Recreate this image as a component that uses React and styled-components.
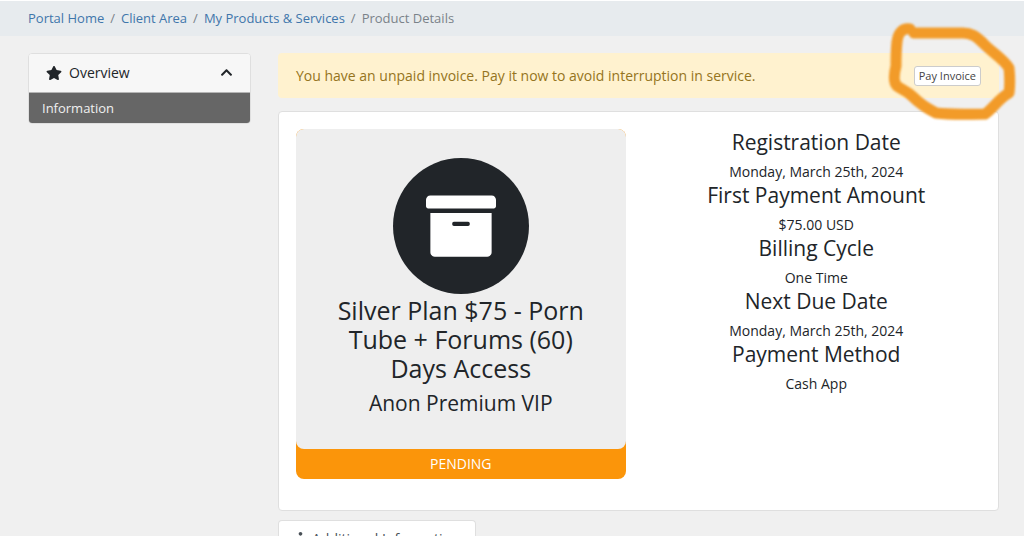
import React, { useState } from "react";
import styled, { createGlobalStyle, ThemeProvider } from "styled-components";
import { FaArchive, FaChevronUp, FaInfo, FaStar } from "react-icons/fa";

const theme = {
  colors: {
    page: "#f0f0f0",
    bar: "#e7ebee",
    white: "#ffffff",
    text: "#212529",
    muted: "#7a8289",
    link: "#3f76ab",
    border: "#dfdfdf",
    active: "#666666",
    warning: "#fff2cf",
    warningText: "#957420",
    pending: "#fb950a",
    marker: "#f29b29",
  },
  font: {
    xs: "11px",
    sm: "13px",
    md: "14px",
    lg: "21px",
    xl: "25px",
  },
};

const GlobalStyle = createGlobalStyle`
  *,
  *::before,
  *::after {
    box-sizing: border-box;
  }

  body {
    margin: 0;
    background-color: ${(p) => p.theme.colors.page};
    color: ${(p) => p.theme.colors.text};
    font-family: "Open Sans", "Noto Sans", sans-serif;
    font-size: ${(p) => p.theme.font.md};
    line-height: 21px;
  }
`;

const Root = styled.div`
  position: relative;
  height: 100vh;
  overflow: hidden;
  border-top: 1px solid ${(p) => p.theme.colors.white};
`;

const BreadcrumbBar = styled.nav`
  padding: 7px 28px;
  background-color: ${(p) => p.theme.colors.bar};
`;

const BreadcrumbList = styled.ol`
  display: flex;
  flex-wrap: wrap;
  margin: 0;
  padding: 0;
  list-style: none;
  font-size: ${(p) => p.theme.font.sm};
  color: ${(p) => p.theme.colors.muted};
`;

const Crumb = styled.li`
  & + &::before {
    content: "/";
    padding: 0 6px;
  }
`;

const CrumbLink = styled.a`
  color: ${(p) => p.theme.colors.link};
  text-decoration: none;

  &:hover {
    text-decoration: underline;
  }
`;

const Layout = styled.div`
  display: grid;
  grid-template-columns: 223px minmax(0, 1fr);
  align-items: start;
  gap: 27px;
  padding: 17px 25px 0 28px;
`;

const Box = styled.div`
  background-color: ${(p) => p.theme.colors.white};
  border: 1px solid ${(p) => p.theme.colors.border};
  border-radius: 4px;
`;

const Sidebar = styled(Box)`
  overflow: hidden;
`;

const SidebarToggle = styled.button`
  display: flex;
  align-items: center;
  gap: 7px;
  width: 100%;
  padding: 8px 17px 9px;
  border: 0;
  background-color: #f7f7f7;
  color: ${(p) => p.theme.colors.text};
  font: inherit;
  text-align: left;
  cursor: pointer;
`;

const SidebarTitle = styled.span`
  flex: 1;
`;

const SidebarLink = styled.a`
  display: block;
  padding: 5px 13px;
  border-top: 1px solid #b5b5b5;
  background-color: ${(p) => p.theme.colors.active};
  color: ${(p) => p.theme.colors.page};
  font-size: ${(p) => p.theme.font.sm};
  line-height: 20px;
  text-decoration: none;
`;

const Alert = styled.div`
  display: flex;
  align-items: center;
  justify-content: space-between;
  margin-bottom: 13px;
  padding: 12px 18px;
  border-radius: 4px;
  background-color: ${(p) => p.theme.colors.warning};
  color: ${(p) => p.theme.colors.warningText};
`;

const PayButton = styled.button`
  padding: 0 4px;
  border: 1px solid #cccccc;
  border-radius: 3px;
  background-color: ${(p) => p.theme.colors.white};
  color: #444444;
  font-family: inherit;
  font-size: ${(p) => p.theme.font.xs};
  line-height: 18px;
  cursor: pointer;
`;

const Card = styled(Box)`
  display: grid;
  grid-template-columns: repeat(2, minmax(0, 1fr));
  gap: 26px;
  margin-bottom: 9px;
  padding: 17px 17px 31px;
  text-align: center;
`;

const Status = styled.div`
  align-self: start;
  border-radius: 8px;
  background-color: ${(p) => p.theme.colors.pending};
  color: ${(p) => p.theme.colors.white};
`;

const Product = styled.div`
  display: flex;
  flex-direction: column;
  align-items: center;
  padding: 29px 28px 33px;
  border-radius: 8px;
  background-color: #eeeeee;
  color: ${(p) => p.theme.colors.text};
`;

const ProductIcon = styled.div`
  display: flex;
  align-items: center;
  justify-content: center;
  width: 136px;
  height: 136px;
  border-radius: 50%;
  background-color: ${(p) => p.theme.colors.text};
  color: ${(p) => p.theme.colors.white};
`;

const ProductName = styled.h3`
  margin: 2px 0 7px;
  font-size: ${(p) => p.theme.font.xl};
  font-weight: 400;
  line-height: 29px;
`;

const ProductGroup = styled.h4`
  margin: 0;
  font-size: ${(p) => p.theme.font.lg};
  font-weight: 400;
  line-height: 26px;
`;

const StatusText = styled.div`
  padding: 4px 0 5px;
`;

const Details = styled.dl`
  margin: 0;
`;

const Term = styled.dt`
  font-size: ${(p) => p.theme.font.lg};
  line-height: 26px;
`;

const Value = styled.dd`
  margin: 6px 0 0;
`;

const Tab = styled.button`
  display: inline-flex;
  align-items: center;
  gap: 5px;
  padding: 7px 15px;
  border: 1px solid ${(p) => p.theme.colors.border};
  border-bottom: 0;
  border-radius: 4px 4px 0 0;
  background-color: ${(p) => p.theme.colors.white};
  color: #495057;
  font: inherit;
`;

const Marker = styled.svg`
  position: absolute;
  top: 9px;
  right: 1px;
  pointer-events: none;
  filter: blur(1px);
`;

const crumbs = ["Portal Home", "Client Area", "My Products & Services"];

const details = [
  { term: "Registration Date", value: "Monday, March 25th, 2024" },
  { term: "First Payment Amount", value: "$75.00 USD" },
  { term: "Billing Cycle", value: "One Time" },
  { term: "Next Due Date", value: "Monday, March 25th, 2024" },
  { term: "Payment Method", value: "Cash App" },
];

const App = () => {
  const [isOpen, setIsOpen] = useState(true);

  return (
    <ThemeProvider theme={theme}>
      <GlobalStyle />
      <Root>
        <BreadcrumbBar aria-label="Breadcrumb">
          <BreadcrumbList>
            {crumbs.map((crumb) => (
              <Crumb key={crumb}>
                <CrumbLink href="#">{crumb}</CrumbLink>
              </Crumb>
            ))}
            <Crumb aria-current="page">Product Details</Crumb>
          </BreadcrumbList>
        </BreadcrumbBar>

        <Layout>
          <Sidebar as="aside">
            <SidebarToggle
              aria-expanded={isOpen}
              onClick={() => setIsOpen(!isOpen)}
            >
              <FaStar size={16} />
              <SidebarTitle>Overview</SidebarTitle>
              <FaChevronUp size={13} />
            </SidebarToggle>
            {isOpen && <SidebarLink href="#information">Information</SidebarLink>}
          </Sidebar>

          <main>
            <Alert>
              You have an unpaid invoice. Pay it now to avoid interruption in
              service.
              <PayButton>Pay Invoice</PayButton>
            </Alert>

            <Card>
              <Status>
                <Product>
                  <ProductIcon>
                    <FaArchive size={70} />
                  </ProductIcon>
                  <ProductName>
                    Silver Plan $75 - Porn Tube + Forums (60) Days Access
                  </ProductName>
                  <ProductGroup>Anon Premium VIP</ProductGroup>
                </Product>
                <StatusText>PENDING</StatusText>
              </Status>

              <Details>
                {details.map(({ term, value }) => (
                  <React.Fragment key={term}>
                    <Term>{term}</Term>
                    <Value>{value}</Value>
                  </React.Fragment>
                ))}
              </Details>
            </Card>

            <Tab>
              <FaInfo size={13} />
              Additional Information
            </Tab>
          </main>
        </Layout>

        {/* hand drawn ring around the pay button */}
        <Marker width="160" height="120" viewBox="0 0 160 120" fill="none">
          <path
            d="M47 19C40 18 35 22 34 32C33 40 33 48 33 56C31 64 30 72 34 76C39 80 44 81 49 86C55 92 65 99 73 103C89 105 105 104 122 104C130 99 135 89 146 83C147 76 147 68 146 58C140 48 127 41 120 33C113 26 108 23 100 23C83 23 67 23 51 23"
            stroke={theme.colors.marker}
            strokeWidth="11"
            strokeLinecap="round"
            strokeLinejoin="round"
          />
        </Marker>
      </Root>
    </ThemeProvider>
  );
};

export default App;
